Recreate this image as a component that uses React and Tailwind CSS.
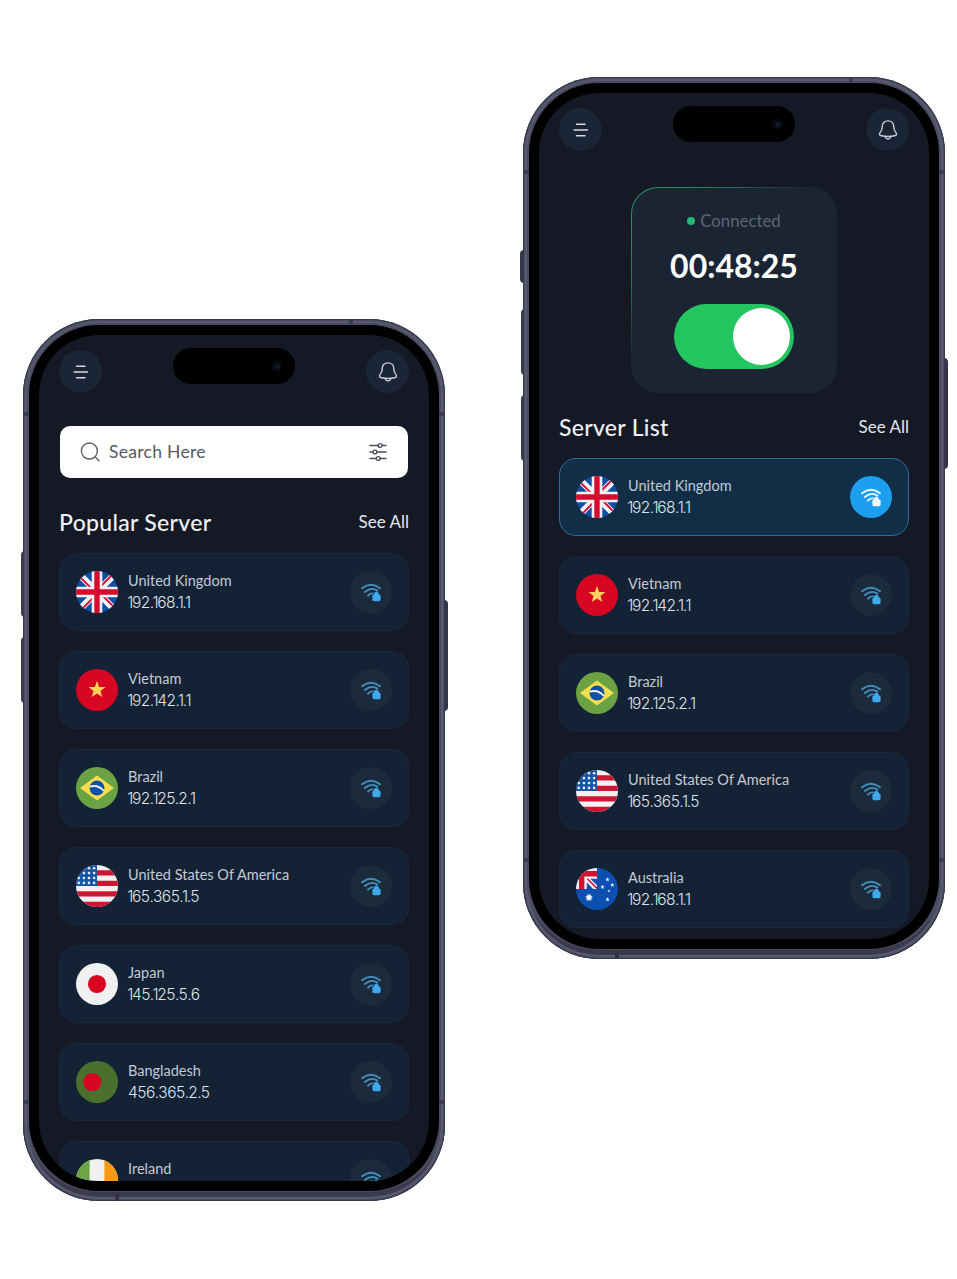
import React from "react";

const STAR =
  "M0 -1 L.235 -.324 L.951 -.309 L.38 .124 L.588 .809 L0 .4 L-.588 .809 L-.38 .124 L-.951 -.309 L-.235 -.324 Z";

function UnitedKingdom() {
  return (
    <>
      <rect width="42" height="42" fill="#0d4da3" />
      <path d="M0 0 L42 42 M42 0 L0 42" stroke="#f3f3f6" strokeWidth="6.6" />
      <path d="M-1 1 L20 22 M41 -1 L20 20 M22 20 L43 41 M22 22 L1 43" stroke="#d80b2f" strokeWidth="1.9" />
      <path d="M21 0 V42 M0 21 H42" stroke="#f3f3f6" strokeWidth="10.6" />
      <path d="M21 0 V42 M0 21 H42" stroke="#d80b2f" strokeWidth="5.4" />
    </>
  );
}

function Vietnam() {
  return (
    <>
      <rect width="42" height="42" fill="#d80523" />
      <path d={STAR} fill="#ffd35a" transform="translate(21 20.8) scale(9)" />
    </>
  );
}

function Brazil() {
  return (
    <>
      <rect width="42" height="42" fill="#6ba344" />
      <path d="M21 8.6 L38 21 L21 33.4 L4 21 Z" fill="#f6dd50" />
      <circle cx="21" cy="21" r="7.5" fill="#0d50a5" />
      <path d="M13.8 19.6 Q22 17.2 27.8 23.8" stroke="#f0f0f0" strokeWidth="1.9" fill="none" />
    </>
  );
}

function UnitedStates() {
  const dots = [];
  for (let r = 0; r < 4; r++)
    for (let c = 0; c < 4; c++) dots.push(<circle key={r + "-" + c} cx={2.8 + c * 5.1} cy={3.2 + r * 4.9} r="1.3" fill="#e6eefa" />);
  return (
    <>
      <rect width="42" height="42" fill="#f3f1f2" />
      <path d="M0 7.8 H42 M0 18.4 H42 M0 28.9 H42 M0 39.4 H42" stroke="#cb1733" strokeWidth="5.2" />
      <rect width="21" height="21" fill="#1755a8" />
      {dots}
    </>
  );
}

function Japan() {
  return (
    <>
      <rect width="42" height="42" fill="#f0f0f1" />
      <circle cx="21" cy="21" r="9.1" fill="#d80422" />
    </>
  );
}

function Bangladesh() {
  return (
    <>
      <rect width="42" height="42" fill="#49702d" />
      <circle cx="16.3" cy="21" r="9.1" fill="#d80423" />
    </>
  );
}

function Ireland() {
  return (
    <>
      <rect width="42" height="42" fill="#f0f0f0" />
      <rect width="13.6" height="42" fill="#6da544" />
      <rect x="28.4" width="13.6" height="42" fill="#ff9811" />
    </>
  );
}

function Australia() {
  return (
    <>
      <rect width="42" height="42" fill="#0b4fb0" />
      <rect width="21" height="21" fill="#f2f2f5" />
      <path d="M3 3 H21 V8.4 H8.4 V21 H3 Z" fill="#d8102f" />
      <path d="M14.2 10.8 H21 V17.2 Z M10.8 14.4 V21 H17.2 Z" fill="#0b4fb0" />
      <path d="M11.4 10.8 L21 20.4" stroke="#c0163a" strokeWidth="1.5" />
      <path d={STAR} fill="#f2f6ff" transform="translate(13 29.5) scale(4.2)" />
      <path d={STAR} fill="#f2f6ff" transform="translate(13 29.5) rotate(180) scale(4)" />
      <path d={STAR} fill="#e8f0fc" transform="translate(31.5 11.5) scale(2.4)" />
      <path d={STAR} fill="#e8f0fc" transform="translate(26.5 19) scale(2.4)" />
      <path d={STAR} fill="#e8f0fc" transform="translate(36.3 17) scale(2.4)" />
      <path d={STAR} fill="#e8f0fc" transform="translate(33 23) scale(1.6)" />
      <path d={STAR} fill="#e8f0fc" transform="translate(31.5 31.5) scale(2.4)" />
    </>
  );
}

const SERVERS = {
  uk: { name: "United Kingdom", ip: "192.168.1.1", Art: UnitedKingdom },
  vn: { name: "Vietnam", ip: "192.142.1.1", Art: Vietnam },
  br: { name: "Brazil", ip: "192.125.2.1", Art: Brazil },
  us: { name: "United States Of America", ip: "165.365.1.5", Art: UnitedStates },
  jp: { name: "Japan", ip: "145.125.5.6", Art: Japan },
  bd: { name: "Bangladesh", ip: "456.365.2.5", Art: Bangladesh },
  ie: { name: "Ireland", ip: "", Art: Ireland },
  au: { name: "Australia", ip: "192.168.1.1", Art: Australia },
};

function WifiLock({ active }) {
  const arc = active ? "#e6f6ff" : "#438fbf";
  const lock = active ? "#f4fbff" : "#3fa9ee";
  return (
    <svg viewBox="0 0 42 42" className="size-full" fill="none" strokeLinecap="round">
      <path d="M12 17.2 Q21 10.4 30 17.2" stroke={arc} strokeWidth="2" />
      <path d="M14.8 21 Q21.4 15.6 27.4 19.6" stroke={arc} strokeWidth="1.9" />
      <path d="M18 24.6 Q20.3 22 22.8 22.4" stroke={arc} strokeWidth="1.9" />
      <path d="M24.3 24.6 V23.6 Q24.3 21.2 26.4 21.2 Q28.5 21.2 28.5 23.6 V24.6 Z" fill={lock} stroke={lock} strokeWidth="1" />
      <rect x="22.4" y="23.6" width="8.2" height="6.6" rx="1.7" fill={lock} />
    </svg>
  );
}

function Ip({ value }) {
  return (
    <span className="block h-[22px] whitespace-nowrap font-['Inter',sans-serif] text-[15.5px] leading-[22px] font-light text-[#dfe4ea]">
      {value.split("").map((ch, i) => (
        <span key={i} className={ch === "1" ? "-ml-[0.8px] tracking-[-1.4px]" : ch === "." ? "tracking-[-0.9px]" : "tracking-[-0.5px]"}>
          {ch}
        </span>
      ))}
    </span>
  );
}

function ServerCard({ id, active }) {
  const { name, ip, Art } = SERVERS[id];
  const tone = active ? "border-[#2c6f99] bg-[#122e47]" : "border-[#17293b] bg-[#142236]";
  return (
    <div className={"flex h-[78px] w-[350px] shrink-0 items-center rounded-[17px] border pr-4 pl-4 " + tone}>
      <svg viewBox="0 0 42 42" className="size-[42px] shrink-0 rounded-full">
        <Art />
      </svg>
      <div className="ml-[10px] flex flex-1 flex-col pb-px">
        <span className="h-[22px] text-[14.5px] leading-[22px] whitespace-nowrap text-[#c3cad3]">{name}</span>
        {ip ? <Ip value={ip} /> : <span className="h-[22px]" />}
      </div>
      <div className={"size-[42px] shrink-0 rounded-full " + (active ? "bg-[#1d9ff0]" : "bg-[#1b2b3b]")}>
        <WifiLock active={active} />
      </div>
    </div>
  );
}

function TopBar() {
  return (
    <div className="flex h-[58px] shrink-0 items-end justify-between">
      <div className="flex size-[43px] items-center justify-center rounded-full bg-[#1a2636]">
        <svg viewBox="0 0 16 16" className="size-4" stroke="#d4dae2" strokeWidth="1.6" strokeLinecap="round">
          <path d="M3.6 2.2 H12 M1.2 8 H14.4 M3.6 13.8 H12" />
        </svg>
      </div>
      <div className="mb-[9px] h-9 w-[122px] rounded-full bg-black pr-[12px]">
        <div className="flex h-full items-center justify-end">
          <div className="flex size-3 items-center justify-center rounded-full bg-[#07080f]">
            <div className="size-[5px] rounded-full bg-[#14172a]" />
          </div>
        </div>
      </div>
      <div className="flex size-[43px] items-center justify-center rounded-full bg-[#1a2636]">
        <svg viewBox="0 0 20 20" className="size-5" fill="none" stroke="#c6cdd6" strokeWidth="1.4" strokeLinejoin="round" strokeLinecap="round">
          <path d="M10 .9 C6.4 .9 4.2 3.4 4.2 6.8 C4.2 10 3.4 11 2 12.6 C.9 14 1.6 15.6 3.4 15.8 Q10 17 16.6 15.8 C18.4 15.6 19.1 14 18 12.6 C16.6 11 15.8 10 15.8 6.8 C15.8 3.4 13.6 .9 10 .9 Z" />
          <path d="M7 16.6 Q8.4 19 10 19 Q11.6 19 13 16.6" />
        </svg>
      </div>
    </div>
  );
}

function Heading({ title, className }) {
  return (
    <div className={"mb-4 flex h-[30px] shrink-0 items-center justify-between whitespace-nowrap " + className}>
      <h2 className="text-[23px] font-medium tracking-[0.3px] text-[#eef1f4]">{title}</h2>
      <span className="text-[17px] text-[#e3e7ec]">See All</span>
    </div>
  );
}

function Phone({ className, topKey, children }) {
  return (
    <div className={"relative h-[882px] w-[422px] shrink-0 " + className}>
      {topKey && <div className="absolute top-[173px] -left-[3px] h-[33px] w-2 rounded-l-[4px] bg-[#35364a]" />}
      <div className="absolute top-[232px] -left-[2px] h-[66px] w-2 rounded-l-[4px] bg-[#3a3b50]" />
      <div className="absolute top-[318px] -left-[2px] h-[66px] w-2 rounded-l-[4px] bg-[#3a3b50]" />
      <div className="absolute top-[281px] -right-[3px] h-[111px] w-2 rounded-r-[4px] bg-[#343449]" />
      <div className="relative h-full w-full rounded-[76px] bg-[#4a4b60] px-[6px] pt-[6px] pb-[10px] shadow-[inset_0_0_2px_1px_#2c2d3f,inset_0_0_0_4px_#5a5b70,inset_0_-9px_0_0_#3a3a4c]">
        <div className="h-full w-full rounded-[70px] bg-black p-[10px]">
          <div className="flex h-[846px] w-[390px] flex-col overflow-hidden rounded-[60px] bg-[#151925] px-5">
            <TopBar />
            {children}
          </div>
        </div>
        <div className="absolute top-[93px] left-0 h-[4px] w-[6px] bg-[#3a3b4e]" />
        <div className="absolute top-[93px] right-0 h-[4px] w-[6px] bg-[#3a3b4e]" />
        <div className="absolute bottom-[97px] left-0 h-[4px] w-[6px] bg-[#3a3b4e]" />
        <div className="absolute right-0 bottom-[97px] h-[4px] w-[6px] bg-[#3a3b4e]" />
        <div className="absolute top-0 right-[92px] h-[5px] w-[4px] bg-[#3a3b4e]" />
        <div className="absolute bottom-0 left-[92px] h-[8px] w-[4px] bg-[#323344]" />
      </div>
    </div>
  );
}

export default function App() {
  return (
    <main className="flex h-[1279px] w-[957px] items-start gap-[78px] overflow-hidden bg-white pl-[23px] font-['Lato',sans-serif]">
      <Phone className="mt-[319px]">
        <div className="mx-px mt-[33px] flex h-[52px] shrink-0 items-center rounded-[10px] bg-white px-5">
          <svg viewBox="0 0 20 20" className="size-5" fill="none" stroke="#5d616a" strokeWidth="1.4" strokeLinecap="round">
            <circle cx="9.4" cy="9" r="8" />
            <path d="M15.2 15 L19 18.8" />
          </svg>
          <span className="ml-[9px] flex-1 text-[17.5px] tracking-[0.3px] text-[#555963]">Search Here</span>
          <svg viewBox="0 0 18 20" className="mr-px h-5 w-[18px]" fill="none" stroke="#4b4e58" strokeWidth="1.4" strokeLinecap="round">
            <path d="M1 3.5 H9 M13.6 3.5 H17 M1 10 H3.6 M8.4 10 H17 M1 16.5 H7 M11.6 16.5 H17" />
            <circle cx="11.2" cy="3.5" r="1.9" />
            <circle cx="6" cy="10" r="1.9" />
            <circle cx="9.2" cy="16.5" r="1.9" />
          </svg>
        </div>
        <Heading title="Popular Server" className="mt-[29px]" />
        <div className="flex flex-col gap-5">
          {["uk", "vn", "br", "us", "jp", "bd", "ie"].map((id) => (
            <ServerCard key={id} id={id} />
          ))}
        </div>
      </Phone>
      <Phone className="mt-[77px]" topKey>
        <div className="mt-9 ml-[72px] h-[206px] w-[206px] shrink-0 rounded-[27px] bg-[linear-gradient(135deg,#2c9c68_0%,#267a57_22%,#1b2533_42%,#1b2533_100%)] p-px">
          <div className="flex h-full w-full flex-col items-center rounded-[26px] bg-[#1a2432]">
            <div className="mt-[21px] flex h-6 items-center gap-[5px] text-[16.8px] text-[#5c6573]">
              <span className="size-2 rounded-full bg-[#2bb57b]" />
              <span>Connected</span>
            </div>
            <div className="mt-[15px] h-9 text-[32px] leading-9 font-bold text-white">00:48:25</div>
            <div className="mt-[20px] flex h-[65px] w-[120px] items-center justify-end rounded-full bg-[#23c55e] pr-1">
              <div className="size-[57px] rounded-full bg-white" />
            </div>
          </div>
        </div>
        <Heading title="Server List" className="mt-[19px]" />
        <div className="flex flex-col gap-5">
          {["uk", "vn", "br", "us", "au"].map((id, i) => (
            <ServerCard key={id} id={id} active={i === 0} />
          ))}
        </div>
      </Phone>
    </main>
  );
}
